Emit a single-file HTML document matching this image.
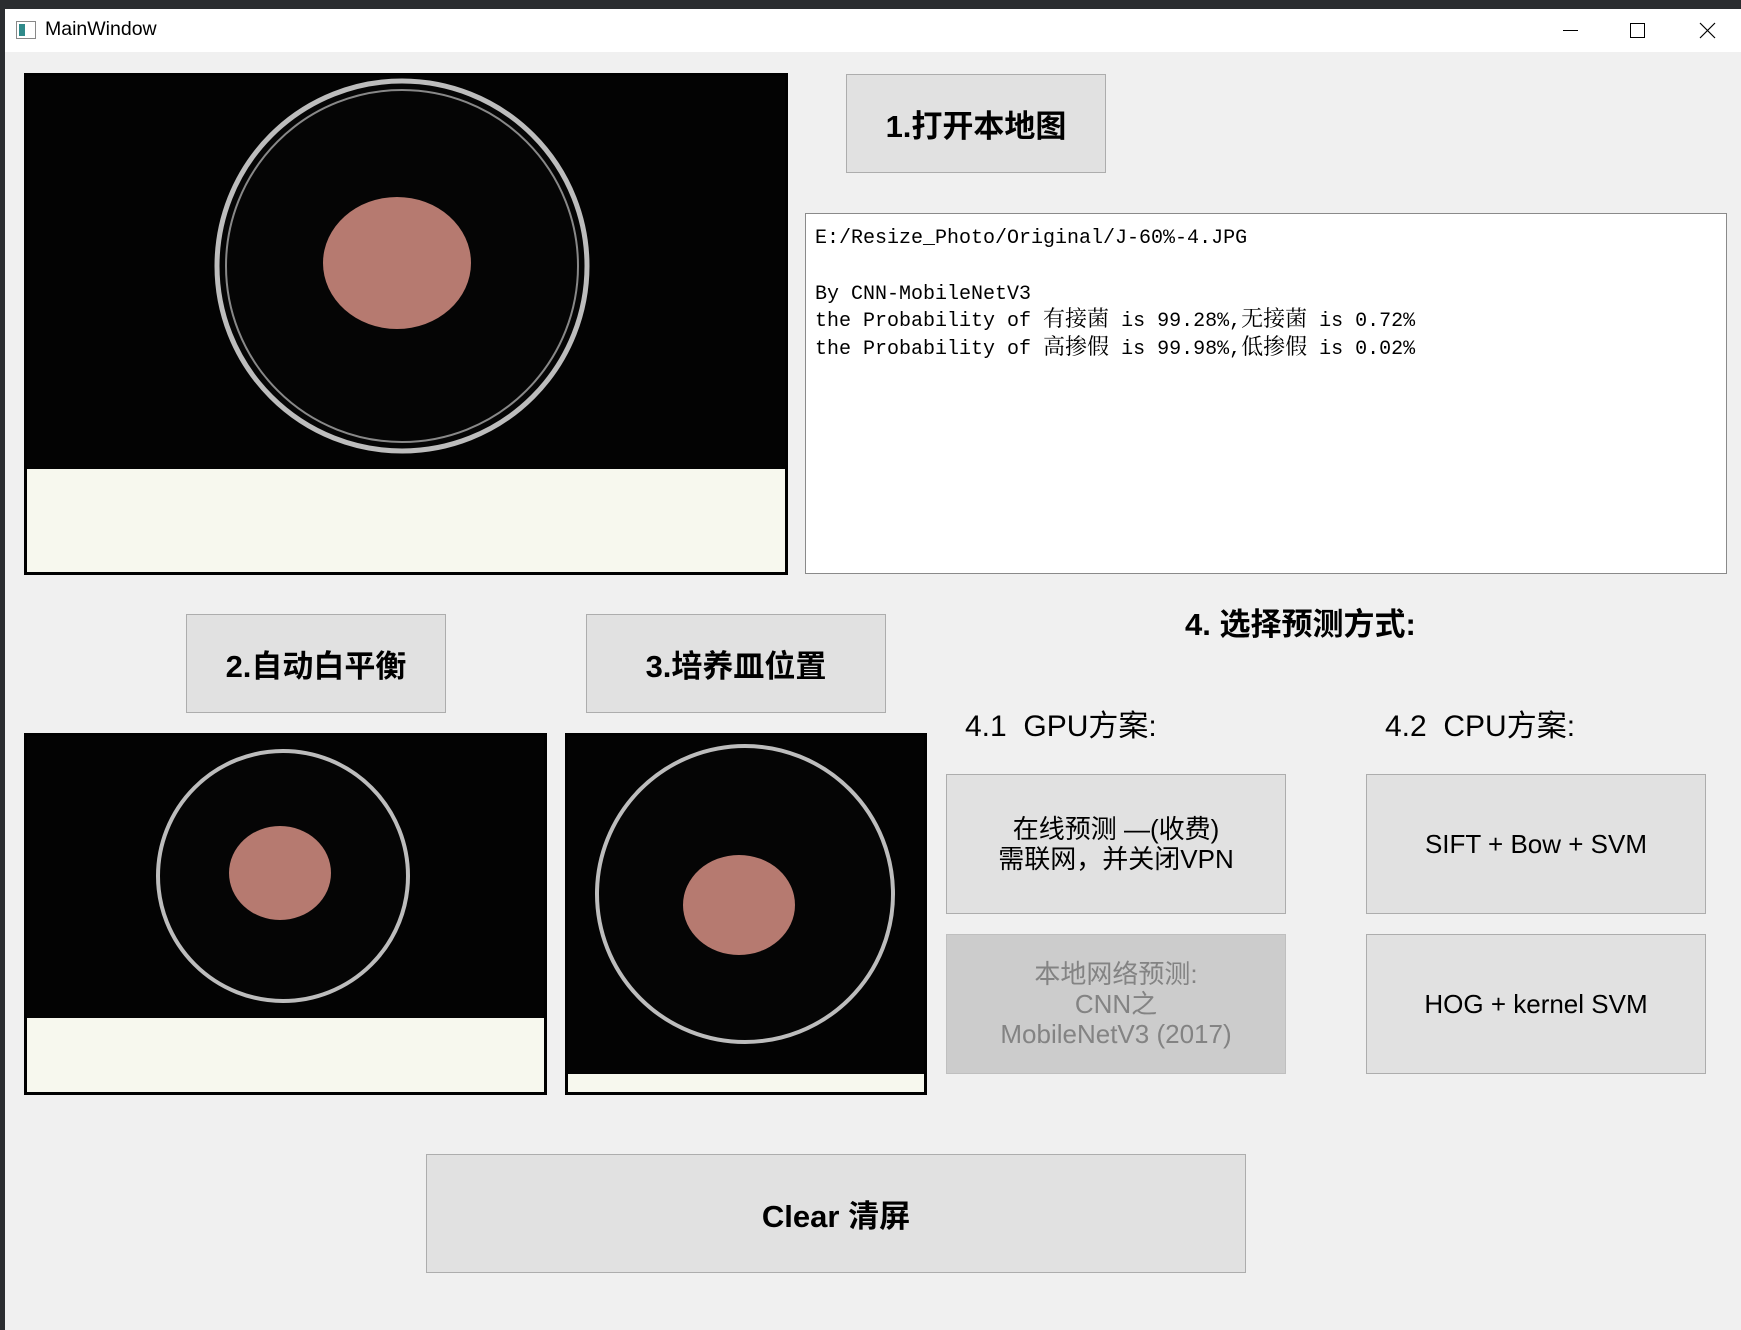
<!DOCTYPE html>
<html><head><meta charset="utf-8"><style>
*{margin:0;padding:0;box-sizing:border-box}
body{width:1741px;height:1330px;background:#2b2d30;position:relative;overflow:hidden;font-family:"Liberation Sans","Noto Sans CJK SC",sans-serif}
.win{position:absolute;left:5px;top:9px;width:1736px;height:1321px;background:#f0f0f0}
.title{position:absolute;left:0;top:0;width:100%;height:43px;background:#fff}
.abs{position:absolute}
.btn{position:absolute;background:#e1e1e1;border:1px solid #adadad;display:flex;align-items:center;justify-content:center;text-align:center;color:#000}
.b1{font-weight:bold;font-size:31px}
.b4{font-size:26px;line-height:30px}
.dis{background:#cccccc;border-color:#bfbfbf;color:#838383}
.tb{position:absolute;left:800px;top:204px;width:922px;height:361px;background:#fff;border:1px solid #8a8a8a;padding:11px 0 0 9px;font-family:"Liberation Mono","Noto Sans CJK SC",monospace;font-size:20px;line-height:27.8px;color:#000;white-space:pre}
.c{font-family:"Noto Serif CJK SC","Noto Sans CJK SC",serif;font-size:22px;line-height:18px;vertical-align:baseline;display:inline-block;height:20px}
.img{position:absolute;border:3px solid #000;background:#000;overflow:hidden}
</style></head><body>
<div class="win">
<div class="title">
 <svg class="abs" style="left:11px;top:12px" width="20" height="18"><rect x="0.5" y="0.5" width="19" height="17" fill="#fff" stroke="#888"/><rect x="3" y="3" width="6" height="12" fill="#2f8a8a"/></svg>
 <div class="abs" style="left:40px;top:9px;font-size:19.5px">MainWindow</div>
 <div class="abs" style="left:1558px;top:21px;width:15px;height:1px;background:#000"></div>
 <div class="abs" style="left:1625px;top:14px;width:15px;height:15px;border:1px solid #000"></div>
 <svg class="abs" style="left:1694px;top:13px" width="17" height="17"><path d="M1 1L16 16M16 1L1 16" stroke="#000" stroke-width="1.2"/></svg>
</div>

<div class="img" style="left:19px;top:64px;width:764px;height:502px">
<svg width="758" height="496"><rect width="758" height="496" fill="#030303"/>
<circle cx="375" cy="190" r="185" fill="#050505" stroke="#bdbdbd" stroke-width="5"/><circle cx="375" cy="190" r="176" fill="none" stroke="#888" stroke-width="2"/>
<ellipse cx="370" cy="187" rx="74" ry="66" fill="#b67a70"/>
<rect x="0" y="393" width="758" height="103" fill="#f7f8ee"/></svg></div>

<div class="btn b1" style="left:841px;top:65px;width:260px;height:99px">1.打开本地图</div>

<div class="tb">E:/Resize_Photo/Original/J-60%-4.JPG

By CNN-MobileNetV3
the Probability of <span class="c">有接菌</span> is 99.28%,<span class="c">无接菌</span> is 0.72%
the Probability of <span class="c">高掺假</span> is 99.98%,<span class="c">低掺假</span> is 0.02%</div>

<div class="abs" style="left:1180px;top:590px;font-size:31px;font-weight:bold">4. 选择预测方式:</div>

<div class="btn b1" style="left:181px;top:605px;width:260px;height:99px">2.自动白平衡</div>
<div class="btn b1" style="left:581px;top:605px;width:300px;height:99px">3.培养皿位置</div>

<div class="abs" style="left:960px;top:692px;font-size:30px">4.1&nbsp; GPU方案:</div>
<div class="abs" style="left:1380px;top:692px;font-size:30px">4.2&nbsp; CPU方案:</div>

<div class="img" style="left:19px;top:724px;width:523px;height:362px">
<svg width="517" height="356"><rect width="517" height="356" fill="#030303"/>
<circle cx="256" cy="140" r="125" fill="#050505" stroke="#bdbdbd" stroke-width="4"/>
<ellipse cx="253" cy="137" rx="51" ry="47" fill="#b67a70"/>
<rect x="0" y="282" width="517" height="74" fill="#f7f8ee"/></svg></div>

<div class="img" style="left:560px;top:724px;width:362px;height:362px">
<svg width="356" height="356"><rect width="356" height="356" fill="#030303"/>
<circle cx="177" cy="158" r="148" fill="#050505" stroke="#bdbdbd" stroke-width="4"/>
<ellipse cx="171" cy="169" rx="56" ry="50" fill="#b67a70"/>
<rect x="0" y="338" width="356" height="18" fill="#f7f8ee"/></svg></div>

<div class="btn b4" style="left:941px;top:765px;width:340px;height:140px">在线预测 —(收费)<br>需联网，并关闭VPN</div>
<div class="btn b4 dis" style="left:941px;top:925px;width:340px;height:140px">本地网络预测:<br>CNN之<br>MobileNetV3 (2017)</div>
<div class="btn b4" style="left:1361px;top:765px;width:340px;height:140px">SIFT + Bow + SVM</div>
<div class="btn b4" style="left:1361px;top:925px;width:340px;height:140px">HOG + kernel SVM</div>

<div class="btn b1" style="left:421px;top:1145px;width:820px;height:119px">Clear 清屏</div>
</div>
</body></html>
